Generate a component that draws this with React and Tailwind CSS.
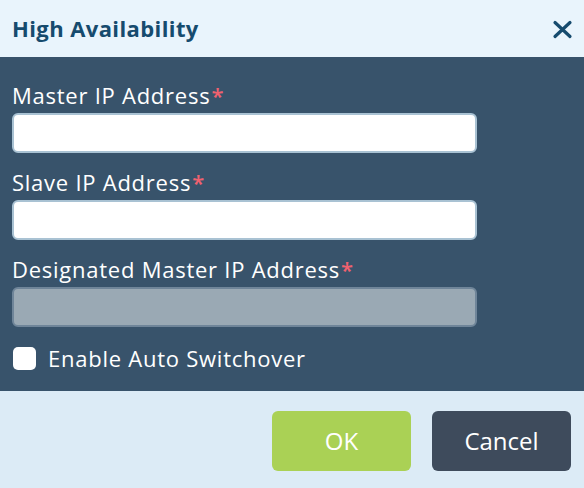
import React from "react";

function Field({ label, disabled }) {
  return (
    <div className="flex flex-col">
      <label className="text-[22px] leading-[28px] tracking-[0.75px] text-white">
        {label}
        <span className="text-[#f0616f] font-semibold ml-[1px]">*</span>
      </label>
      <input
        disabled={disabled}
        className={
          "mt-[4px] h-[40px] w-[465px] rounded-[6px] border-2 outline-none " +
          (disabled
            ? "bg-[#9aa9b4] border-[#6f8599]"
            : "bg-white border-[#a9c2d3]")
        }
      />
    </div>
  );
}

export default function App() {
  return (
    <div
      className="w-[584px] h-[488px] flex flex-col"
      style={{ fontFamily: '"Open Sans", "Noto Sans", sans-serif' }}
    >
      <div className="h-[57px] bg-[#e9f4fc] flex items-center justify-between pl-[12px] pr-[11px]">
        <h1 className="text-[22px] tracking-[0.4px] font-bold text-[#164b6e] leading-none pb-[2px]">
          High Availability
        </h1>
        <svg width="21" height="19" viewBox="0 0 21 19" className="mt-[2px]">
          <path
            d="M3 2.5 L18 16.5 M18 2.5 L3 16.5"
            stroke="#164b6e"
            strokeWidth="3.2"
            strokeLinecap="round"
          />
        </svg>
      </div>
      <div className="h-[334px] bg-[#38536b] flex flex-col pl-[12px] pt-[24px] gap-[15px]">
        <Field label="Master IP Address" />
        <Field label="Slave IP Address" />
        <Field label="Designated Master IP Address" disabled />
        <div className="flex items-center mt-[2px]">
          <div className="w-[23px] h-[23px] bg-white rounded-[5px] ml-[1px]" />
          <span className="ml-[12px] text-[22px] leading-[28px] tracking-[0.75px] text-white">
            Enable Auto Switchover
          </span>
        </div>
      </div>
      <div className="flex-1 bg-[#dcebf6] flex justify-end items-start pt-[20px] pr-[13px] gap-[21px]">
        <button className="w-[139px] h-[60px] rounded-[6px] bg-[#aad155] text-white text-[24px]">
          OK
        </button>
        <button className="w-[139px] h-[60px] rounded-[6px] bg-[#3e4b5c] text-white text-[24px]">
          Cancel
        </button>
      </div>
    </div>
  );
}
